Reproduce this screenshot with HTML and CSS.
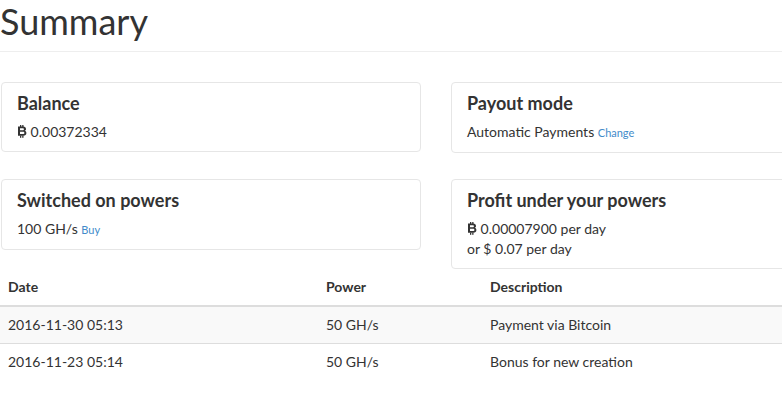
FILE: index.html
```html
<!DOCTYPE html>
<html>
<head>
<meta charset="utf-8">
<link rel="stylesheet" href="styles.css">
</head>
<body>
<div class="page">
  <div class="page-header">
    <h1>Summary</h1>
  </div>
  <div class="cards">
    <div class="card">
      <h3 class="card-title">Balance</h3>
      <div class="card-text"><svg class="btc" viewBox="0 0 10 13" width="10" height="13"><path d="M1 1.5h5.2c1.8 0 2.8.9 2.8 2.4 0 .9-.5 1.6-1.3 1.9 1 .3 1.7 1.1 1.7 2.2 0 1.7-1.2 2.8-3.1 2.8H1z M3 3.2v2h2.7c.8 0 1.2-.4 1.2-1s-.4-1-1.2-1z M3 6.8v2.3h3c.9 0 1.4-.4 1.4-1.15S6.9 6.8 6 6.8z" fill="#333" fill-rule="evenodd"/><rect x="3" y="0" width="1.3" height="2" fill="#333"/><rect x="5.2" y="0" width="1.3" height="2" fill="#333"/><rect x="3" y="10.6" width="1.3" height="2.2" fill="#333"/><rect x="5.2" y="10.6" width="1.3" height="2.2" fill="#333"/></svg> 0.00372334</div>
    </div>
    <div class="card">
      <h3 class="card-title">Payout mode</h3>
      <div class="card-text">Automatic Payments <a class="link" href="#">Change</a></div>
    </div>
    <div class="card">
      <h3 class="card-title">Switched on powers</h3>
      <div class="card-text">100 GH/s <a class="link" href="#">Buy</a></div>
    </div>
    <div class="card">
      <h3 class="card-title">Profit under your powers</h3>
      <div class="card-text"><svg class="btc" viewBox="0 0 10 13" width="10" height="13"><path d="M1 1.5h5.2c1.8 0 2.8.9 2.8 2.4 0 .9-.5 1.6-1.3 1.9 1 .3 1.7 1.1 1.7 2.2 0 1.7-1.2 2.8-3.1 2.8H1z M3 3.2v2h2.7c.8 0 1.2-.4 1.2-1s-.4-1-1.2-1z M3 6.8v2.3h3c.9 0 1.4-.4 1.4-1.150S6.9 6.8 6 6.8z" fill="#333" fill-rule="evenodd"/><rect x="3" y="0" width="1.3" height="2" fill="#333"/><rect x="5.2" y="0" width="1.3" height="2" fill="#333"/><rect x="3" y="10.6" width="1.3" height="2.2" fill="#333"/><rect x="5.2" y="10.6" width="1.3" height="2.2" fill="#333"/></svg> 0.00007900 per day<br>or $ 0.07 per day</div>
    </div>
  </div>
  <table class="history">
    <thead>
      <tr><th class="c-date">Date</th><th class="c-power">Power</th><th>Description</th></tr>
    </thead>
    <tbody>
      <tr class="striped"><td>2016-11-30 05:13</td><td>50 GH/s</td><td>Payment via Bitcoin</td></tr>
      <tr><td>2016-11-23 05:14</td><td>50 GH/s</td><td>Bonus for new creation</td></tr>
    </tbody>
  </table>
</div>
</body>
</html>
```
FILE: styles.css
```css
html, body {
  margin: 0;
  padding: 0;
  background: #fff;
  overflow: hidden;
}
body {
  font-family: Lato, "Open Sans", sans-serif;
  font-size: 14px;
  line-height: 20px;
  color: #333;
}
.page {
  width: 872px;
}
.page-header {
  padding-top: 1px;
  border-bottom: 1px solid #eee;
}
.page-header h1 {
  margin: 0;
  font-size: 36px;
  font-weight: 400;
  line-height: 40px;
  padding-bottom: 10px;
}
.cards {
  display: grid;
  grid-template-columns: 420px 420px;
  column-gap: 30px;
  row-gap: 26px;
  align-items: start;
  margin: 30px 0 0 1px;
}
.card {
  border: 1px solid #e6e6e6;
  border-radius: 4px;
  padding: 9px 15px;
}
.card-title {
  margin: 0 0 8px;
  font-size: 18px;
  line-height: 22px;
  font-weight: 700;
}
.card-text {
  font-size: 14px;
  line-height: 20px;
}
.btc {
  vertical-align: -1px;
}
.link {
  color: #428bca;
  text-decoration: none;
  font-size: 11px;
}
.history {
  border-collapse: collapse;
  width: 872px;
  table-layout: fixed;
}
.history th, .history td {
  text-align: left;
  padding: 8px;
  line-height: 20px;
  font-size: 14px;
}
.history th {
  font-weight: 700;
  border-bottom: 2px solid #ddd;
}
.history tbody tr + tr td {
  border-top: 1px solid #ddd;
}
.c-date { width: 302px; }
.c-power { width: 148px; }
.striped td {
  background: #f9f9f9;
}
```
